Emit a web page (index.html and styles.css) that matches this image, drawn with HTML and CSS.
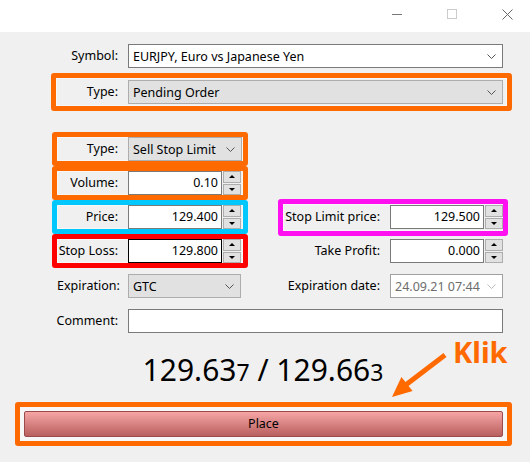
FILE: index.html
```html
<!DOCTYPE html>
<html>
<head>
<meta charset="utf-8">
<link rel="stylesheet" href="styles.css">
</head>
<body>
<div class="screen">
  <div class="titlebar">
    <span class="tb-min"></span>
    <span class="tb-max"></span>
    <svg class="tb-close" width="11" height="11" viewBox="0 0 11 11"><path d="M0.5 0.5 L10.5 10.5 M10.5 0.5 L0.5 10.5" stroke="#666" stroke-width="1" fill="none"/></svg>
  </div>
  <div class="dialog">
    <div class="field wide">
      <span class="lbl">Symbol:</span>
      <div class="combo white"><span>EURJPY, Euro vs Japanese Yen</span><svg class="chev" width="9" height="5" viewBox="0 0 9 5"><path d="M0.5 0.5 L4.5 4.5 L8.5 0.5" stroke="#555" fill="none"/></svg></div>
    </div>
    <div class="field wide hl orange typebox">
      <span class="lbl">Type:</span>
      <div class="combo"><span>Pending Order</span><svg class="chev" width="9" height="5" viewBox="0 0 9 5"><path d="M0.5 0.5 L4.5 4.5 L8.5 0.5" stroke="#555" fill="none"/></svg></div>
    </div>
    <div class="grid2">
      <div class="cell-l hl orange r1">
        <span class="lbl">Type:</span>
        <div class="combo"><span>Sell Stop Limit</span><svg class="chev" width="9" height="5" viewBox="0 0 9 5"><path d="M0.5 0.5 L4.5 4.5 L8.5 0.5" stroke="#555" fill="none"/></svg></div>
      </div>
      <div class="cell-l hl orange r2">
        <span class="lbl">Volume:</span>
        <div class="num"><div class="inp">0.10</div><div class="spin"><span class="up"></span><span class="dn"></span></div></div>
      </div>
      <div class="cell-l hl cyan r3">
        <span class="lbl">Price:</span>
        <div class="num"><div class="inp">129.400</div><div class="spin"><span class="up"></span><span class="dn"></span></div></div>
      </div>
      <div class="cell-r hl magenta r3">
        <span class="lbl">Stop Limit price:</span>
        <div class="num"><div class="inp">129.500</div><div class="spin"><span class="up"></span><span class="dn"></span></div></div>
      </div>
      <div class="cell-l hl red r4">
        <span class="lbl">Stop Loss:</span>
        <div class="num"><div class="inp focus">129.800</div><div class="spin"><span class="up"></span><span class="dn"></span></div></div>
      </div>
      <div class="cell-r plain r4">
        <span class="lbl">Take Profit:</span>
        <div class="num"><div class="inp">0.000</div><div class="spin"><span class="up"></span><span class="dn"></span></div></div>
      </div>
      <div class="cell-l plain r5">
        <span class="lbl">Expiration:</span>
        <div class="combo gtc"><span>GTC</span><svg class="chev" width="9" height="5" viewBox="0 0 9 5"><path d="M0.5 0.5 L4.5 4.5 L8.5 0.5" stroke="#555" fill="none"/></svg></div>
      </div>
      <div class="cell-r plain r5">
        <span class="lbl">Expiration date:</span>
        <div class="combo white disabled"><span>24.09.21 07:44</span><svg class="chev" width="9" height="5" viewBox="0 0 9 5"><path d="M0.5 0.5 L4.5 4.5 L8.5 0.5" stroke="#bbb" fill="none"/></svg></div>
      </div>
    </div>
    <div class="field wide comment">
      <span class="lbl">Comment:</span>
      <div class="inp text"></div>
    </div>
    <div class="quote">129.63<small>7</small> / 129.66<small>3</small></div>
    <div class="hl orange placebox">
      <div class="placebtn">Place</div>
    </div>
    <span class="klik">Klik</span>
    <svg class="arrow" width="80" height="55" viewBox="0 0 80 55">
      <path d="M65 5 L25 35.5" stroke="#ff6a00" stroke-width="5" fill="none"/>
      <polygon points="21.4,27 32.6,41 12,47" fill="#ff6a00"/>
    </svg>
  </div>
</div>
</body>
</html>
```

FILE: styles.css
```css
* { box-sizing: border-box; }
html, body { margin: 0; padding: 0; }
body {
  font-family: "Noto Sans", "DejaVu Sans", sans-serif;
  font-size: 12.5px;
  color: #000;
  background: #f0f0f0;
}
.screen {
  position: relative;
  width: 530px;
  height: 462px;
  overflow: hidden;
}
.titlebar {
  height: 32px;
  background: #fff;
  display: flex;
  align-items: center;
  padding-left: 392px;
}
.tb-min {
  width: 10px;
  height: 1px;
  background: #777;
  margin-top: -4px;
}
.tb-max {
  width: 10px;
  height: 10px;
  border: 1px solid #ccc;
  margin-left: 45px;
  margin-top: -4px;
}
.tb-close {
  margin-left: 45px;
  margin-top: -4px;
}
.dialog {
  position: relative;
  height: 430px;
  background: #f0f0f0;
  padding-top: 12px;
}
.lbl {
  text-align: right;
  padding-right: 10px;
  white-space: nowrap;
  line-height: 16px;
}
.field {
  display: grid;
  grid-template-columns: 72px 1fr;
  align-items: center;
}
.wide {
  margin-left: 51px;
  width: 461px;
  padding: 0 9px 0 5px;
}
.hl {
  border: 5px solid;
  border-radius: 3px;
  box-shadow: inset 0 0 0 1px #f7f7f7;
}
.orange { border-color: #ff6a00; }
.cyan { border-color: #00c8ff; }
.red { border-color: #ff0000; }
.magenta { border-color: #ff10f0; }
.typebox {
  margin-top: 5px;
  padding: 2px 4px 2px 0;
}
.combo {
  height: 24px;
  border: 1px solid #adadad;
  background: #e1e1e1;
  display: flex;
  align-items: center;
  justify-content: space-between;
  padding: 0 6px 0 4px;
  white-space: nowrap;
}
.combo.white {
  background: #fff;
  border-color: #7a7a7a;
}
.combo.disabled {
  color: #6d6d6d;
  border-color: #a0a0a0;
}
.chev { flex: none; }
.grid2 {
  margin-top: 21px;
  margin-left: 52px;
  display: grid;
  grid-template-columns: 196px 230px;
  grid-template-rows: 34px 34px 34px 34px 36px;
  column-gap: 30px;
}
.cell-l, .cell-r {
  display: grid;
  align-items: center;
  grid-column: 1;
}
.cell-l { grid-template-columns: 71px 1fr; }
.cell-r { grid-template-columns: 107px 1fr; grid-column: 2; }
.cell-l.hl { height: 34px; padding: 0 1px 0 0; }
.cell-r.hl {
  height: 37px;
  align-self: center;
  padding: 1px 1px 1px 0;
}
.cell-l.plain { padding-left: 5px; }
.cell-r.plain { padding-left: 5px; }
.cell-l.plain .combo { width: 113px; }
.cell-r.plain .combo { width: 113px; }
.r1 { grid-row: 1; }
.r2 { grid-row: 2; }
.r3 { grid-row: 3; }
.r4 { grid-row: 4; }
.r5 { grid-row: 5; }
.num {
  display: flex;
  height: 24px;
}
.inp {
  width: 94px;
  height: 24px;
  background: #fff;
  border: 1px solid #7a7a7a;
  text-align: right;
  padding-right: 3px;
  line-height: 22px;
}
.inp.focus { border-color: #000; }
.inp.text { width: auto; }
.spin {
  width: 18px;
  margin-left: 1px;
  display: flex;
  flex-direction: column;
  gap: 1px;
}
.spin span {
  flex: 1;
  border: 1px solid #adadad;
  background: #e1e1e1;
  display: flex;
  align-items: center;
  justify-content: center;
}
.spin .up::after {
  content: "";
  border-left: 3px solid transparent;
  border-right: 3px solid transparent;
  border-bottom: 3px solid #000;
}
.spin .dn::after {
  content: "";
  border-left: 3px solid transparent;
  border-right: 3px solid transparent;
  border-top: 3px solid #000;
}
.comment { margin-top: 5px; }
.quote {
  margin-top: 19px;
  height: 36px;
  line-height: 36px;
  font-size: 30px;
  text-align: center;
  padding-right: 4px;
  white-space: nowrap;
}
.quote small { font-size: 23px; }
.placebox {
  margin-top: 14px;
  margin-left: 15px;
  width: 497px;
  padding: 4px 4px 4px 4px;
  background: #f7f7f7;
}
.placebtn {
  height: 26px;
  border: 1px solid #9b4b4b;
  border-radius: 2px;
  background: linear-gradient(#f6a5a5, #b95f5f);
  text-align: center;
  line-height: 24px;
  font-size: 12.5px;
}
.klik {
  position: absolute;
  left: 453px;
  top: 305px;
  font-size: 29px;
  font-weight: bold;
  color: #ff6a00;
  line-height: 29px;
}
.arrow {
  position: absolute;
  left: 380px;
  top: 318px;
}
```
